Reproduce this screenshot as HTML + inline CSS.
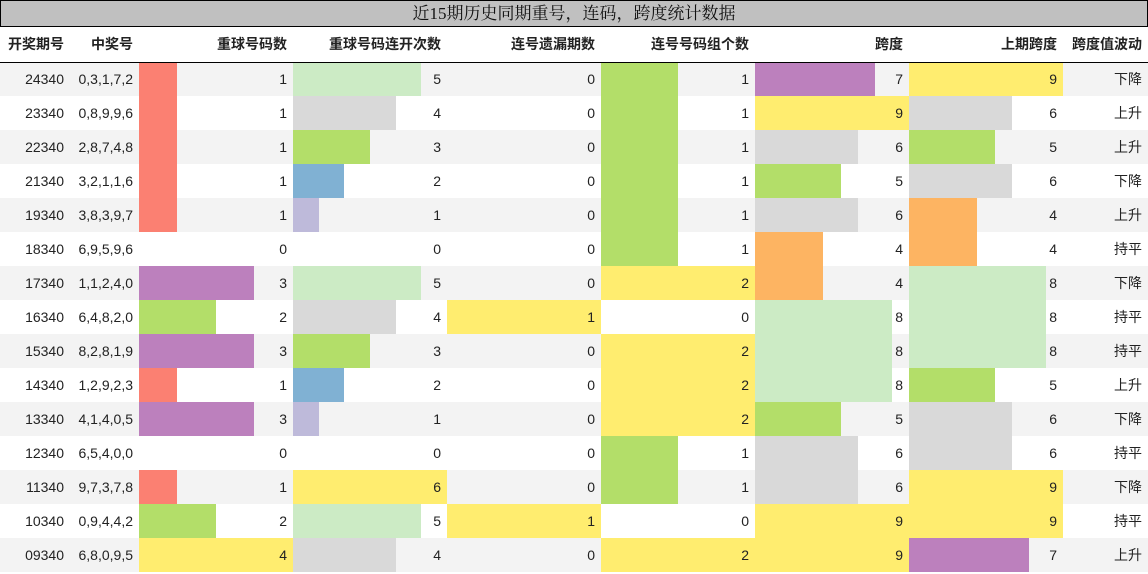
<!DOCTYPE html>
<html><head><meta charset="utf-8"><style>
*{margin:0;padding:0;box-sizing:border-box}
body{width:1148px;height:574px;background:#fff;font-family:"Liberation Sans","Noto Sans CJK SC",sans-serif;font-size:14px;color:#222;overflow:hidden}
.t{height:27px;background:#c0c0c0;border:1px solid #000;text-align:center;font-family:"Liberation Serif","Noto Serif CJK SC",serif;font-size:17px;line-height:25px;color:#111}
table{border-collapse:collapse;table-layout:fixed;width:1148px}
th{height:35px;font-weight:bold;text-align:right;padding:0 6px 0 0;border-bottom:1px solid #000;font-size:14px}
td{height:34px;text-align:right;padding:0 6px 0 0;position:relative}
tr.g td{background:#f3f3f3}
td i{position:absolute;left:0;top:0;bottom:0}
td b{position:relative;font-weight:normal}
</style></head><body>
<div class="t">近15期历史同期重号，连码，跨度统计数据</div>
<table>
<colgroup><col style="width:70px"><col style="width:69px"><col style="width:154px"><col style="width:154px"><col style="width:154px"><col style="width:154px"><col style="width:154px"><col style="width:154px"><col style="width:85px"></colgroup>
<tr><th>开奖期号</th><th>中奖号</th><th>重球号码数</th><th>重球号码连开次数</th><th>连号遗漏期数</th><th>连号号码组个数</th><th>跨度</th><th>上期跨度</th><th>跨度值波动</th></tr>
<tr class="g"><td>24340</td><td>0,3,1,7,2</td><td><i style="width:38px;background:#fb8072"></i><b>1</b></td><td><i style="width:128px;background:#ccebc5"></i><b>5</b></td><td><b>0</b></td><td><i style="width:77px;background:#b3de69"></i><b>1</b></td><td><i style="width:120px;background:#bc80bd"></i><b>7</b></td><td><i style="width:154px;background:#ffed6f"></i><b>9</b></td><td>下降</td></tr>
<tr><td>23340</td><td>0,8,9,9,6</td><td><i style="width:38px;background:#fb8072"></i><b>1</b></td><td><i style="width:103px;background:#d9d9d9"></i><b>4</b></td><td><b>0</b></td><td><i style="width:77px;background:#b3de69"></i><b>1</b></td><td><i style="width:154px;background:#ffed6f"></i><b>9</b></td><td><i style="width:103px;background:#d9d9d9"></i><b>6</b></td><td>上升</td></tr>
<tr class="g"><td>22340</td><td>2,8,7,4,8</td><td><i style="width:38px;background:#fb8072"></i><b>1</b></td><td><i style="width:77px;background:#b3de69"></i><b>3</b></td><td><b>0</b></td><td><i style="width:77px;background:#b3de69"></i><b>1</b></td><td><i style="width:103px;background:#d9d9d9"></i><b>6</b></td><td><i style="width:86px;background:#b3de69"></i><b>5</b></td><td>上升</td></tr>
<tr><td>21340</td><td>3,2,1,1,6</td><td><i style="width:38px;background:#fb8072"></i><b>1</b></td><td><i style="width:51px;background:#80b1d3"></i><b>2</b></td><td><b>0</b></td><td><i style="width:77px;background:#b3de69"></i><b>1</b></td><td><i style="width:86px;background:#b3de69"></i><b>5</b></td><td><i style="width:103px;background:#d9d9d9"></i><b>6</b></td><td>下降</td></tr>
<tr class="g"><td>19340</td><td>3,8,3,9,7</td><td><i style="width:38px;background:#fb8072"></i><b>1</b></td><td><i style="width:26px;background:#bebada"></i><b>1</b></td><td><b>0</b></td><td><i style="width:77px;background:#b3de69"></i><b>1</b></td><td><i style="width:103px;background:#d9d9d9"></i><b>6</b></td><td><i style="width:68px;background:#fdb462"></i><b>4</b></td><td>上升</td></tr>
<tr><td>18340</td><td>6,9,5,9,6</td><td><b>0</b></td><td><b>0</b></td><td><b>0</b></td><td><i style="width:77px;background:#b3de69"></i><b>1</b></td><td><i style="width:68px;background:#fdb462"></i><b>4</b></td><td><i style="width:68px;background:#fdb462"></i><b>4</b></td><td>持平</td></tr>
<tr class="g"><td>17340</td><td>1,1,2,4,0</td><td><i style="width:115px;background:#bc80bd"></i><b>3</b></td><td><i style="width:128px;background:#ccebc5"></i><b>5</b></td><td><b>0</b></td><td><i style="width:154px;background:#ffed6f"></i><b>2</b></td><td><i style="width:68px;background:#fdb462"></i><b>4</b></td><td><i style="width:137px;background:#ccebc5"></i><b>8</b></td><td>下降</td></tr>
<tr><td>16340</td><td>6,4,8,2,0</td><td><i style="width:77px;background:#b3de69"></i><b>2</b></td><td><i style="width:103px;background:#d9d9d9"></i><b>4</b></td><td><i style="width:154px;background:#ffed6f"></i><b>1</b></td><td><b>0</b></td><td><i style="width:137px;background:#ccebc5"></i><b>8</b></td><td><i style="width:137px;background:#ccebc5"></i><b>8</b></td><td>持平</td></tr>
<tr class="g"><td>15340</td><td>8,2,8,1,9</td><td><i style="width:115px;background:#bc80bd"></i><b>3</b></td><td><i style="width:77px;background:#b3de69"></i><b>3</b></td><td><b>0</b></td><td><i style="width:154px;background:#ffed6f"></i><b>2</b></td><td><i style="width:137px;background:#ccebc5"></i><b>8</b></td><td><i style="width:137px;background:#ccebc5"></i><b>8</b></td><td>持平</td></tr>
<tr><td>14340</td><td>1,2,9,2,3</td><td><i style="width:38px;background:#fb8072"></i><b>1</b></td><td><i style="width:51px;background:#80b1d3"></i><b>2</b></td><td><b>0</b></td><td><i style="width:154px;background:#ffed6f"></i><b>2</b></td><td><i style="width:137px;background:#ccebc5"></i><b>8</b></td><td><i style="width:86px;background:#b3de69"></i><b>5</b></td><td>上升</td></tr>
<tr class="g"><td>13340</td><td>4,1,4,0,5</td><td><i style="width:115px;background:#bc80bd"></i><b>3</b></td><td><i style="width:26px;background:#bebada"></i><b>1</b></td><td><b>0</b></td><td><i style="width:154px;background:#ffed6f"></i><b>2</b></td><td><i style="width:86px;background:#b3de69"></i><b>5</b></td><td><i style="width:103px;background:#d9d9d9"></i><b>6</b></td><td>下降</td></tr>
<tr><td>12340</td><td>6,5,4,0,0</td><td><b>0</b></td><td><b>0</b></td><td><b>0</b></td><td><i style="width:77px;background:#b3de69"></i><b>1</b></td><td><i style="width:103px;background:#d9d9d9"></i><b>6</b></td><td><i style="width:103px;background:#d9d9d9"></i><b>6</b></td><td>持平</td></tr>
<tr class="g"><td>11340</td><td>9,7,3,7,8</td><td><i style="width:38px;background:#fb8072"></i><b>1</b></td><td><i style="width:154px;background:#ffed6f"></i><b>6</b></td><td><b>0</b></td><td><i style="width:77px;background:#b3de69"></i><b>1</b></td><td><i style="width:103px;background:#d9d9d9"></i><b>6</b></td><td><i style="width:154px;background:#ffed6f"></i><b>9</b></td><td>下降</td></tr>
<tr><td>10340</td><td>0,9,4,4,2</td><td><i style="width:77px;background:#b3de69"></i><b>2</b></td><td><i style="width:128px;background:#ccebc5"></i><b>5</b></td><td><i style="width:154px;background:#ffed6f"></i><b>1</b></td><td><b>0</b></td><td><i style="width:154px;background:#ffed6f"></i><b>9</b></td><td><i style="width:154px;background:#ffed6f"></i><b>9</b></td><td>持平</td></tr>
<tr class="g"><td>09340</td><td>6,8,0,9,5</td><td><i style="width:154px;background:#ffed6f"></i><b>4</b></td><td><i style="width:103px;background:#d9d9d9"></i><b>4</b></td><td><b>0</b></td><td><i style="width:154px;background:#ffed6f"></i><b>2</b></td><td><i style="width:154px;background:#ffed6f"></i><b>9</b></td><td><i style="width:120px;background:#bc80bd"></i><b>7</b></td><td>上升</td></tr>
</table>
</body></html>
